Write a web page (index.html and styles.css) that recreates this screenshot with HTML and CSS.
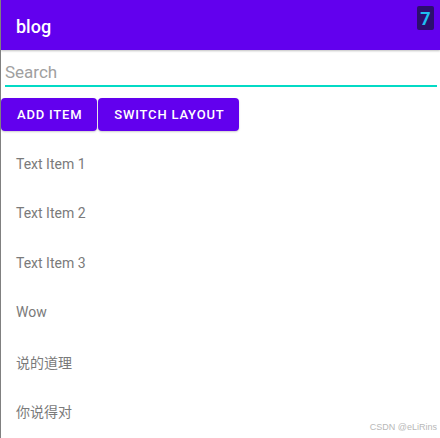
FILE: index.html
```html
<!DOCTYPE html>
<html>
<head>
<meta charset="utf-8">
<link rel="stylesheet" href="styles.css">
</head>
<body>
<div class="screen">
  <header class="appbar">
    <span class="title">blog</span>
  </header>
  <div class="badge">7</div>
  <div class="search"><span class="placeholder">Search</span></div>
  <div class="actions">
    <button class="btn">ADD ITEM</button>
    <button class="btn">SWITCH LAYOUT</button>
  </div>
  <ul class="list">
    <li class="item">Text Item 1</li>
    <li class="item">Text Item 2</li>
    <li class="item">Text Item 3</li>
    <li class="item">Wow</li>
    <li class="item">说的道理</li>
    <li class="item">你说得对</li>
  </ul>
  <div class="watermark">CSDN @eLiRins</div>
</div>
</body>
</html>
```
FILE: styles.css
```css
html, body {
  margin: 0;
  padding: 0;
  background: #ffffff;
}
body {
  font-family: Roboto, "Noto Sans CJK SC", sans-serif;
}
.screen {
  position: relative;
  width: 439px;
  height: 438px;
  border-left: 1px solid #808080;
  overflow: hidden;
  background: #ffffff;
}
.appbar {
  height: 50px;
  background: #6200ee;
  display: flex;
  align-items: center;
  padding-left: 15px;
  box-shadow: 0 1px 2px rgba(0, 0, 0, 0.25);
  position: relative;
  z-index: 1;
}
.title {
  color: #ffffff;
  font-size: 18px;
  font-weight: 500;
  margin-top: 2px;
}
.badge {
  position: absolute;
  top: 6px;
  left: 416px;
  width: 17px;
  height: 24px;
  border-radius: 2px;
  background: #2c0e6e;
  color: #1ec0f2;
  font-size: 18px;
  font-weight: 700;
  display: flex;
  align-items: center;
  justify-content: center;
  z-index: 2;
}
.search {
  margin: 4px 3px 0 4px;
  border-bottom: 2px solid #03dac5;
  display: flex;
  align-items: flex-end;
  padding-bottom: 3px;
  height: 28px;
}
.placeholder {
  color: #a0a0a0;
  font-size: 17px;
  line-height: 20px;
}
.actions {
  display: flex;
  gap: 1px;
  margin-top: 11px;
}
.btn {
  height: 33px;
  padding: 0 15px 0 16px;
  border: none;
  border-radius: 4px;
  background: #6200ee;
  color: #ffffff;
  font-family: Roboto, sans-serif;
  font-size: 13px;
  font-weight: 500;
  letter-spacing: 0.8px;
  box-shadow: 0 1px 2px rgba(0, 0, 0, 0.2);
}
.list {
  list-style: none;
  margin: 8px 0 0 0;
  padding: 0;
}
.item {
  height: 49.5px;
  display: flex;
  align-items: center;
  padding-left: 15px;
  font-size: 14px;
  color: #7a7a7a;
}
.watermark {
  position: absolute;
  right: 3px;
  bottom: 6px;
  font-family: "Liberation Sans", sans-serif;
  font-size: 9px;
  color: #b8b8b8;
}
```
